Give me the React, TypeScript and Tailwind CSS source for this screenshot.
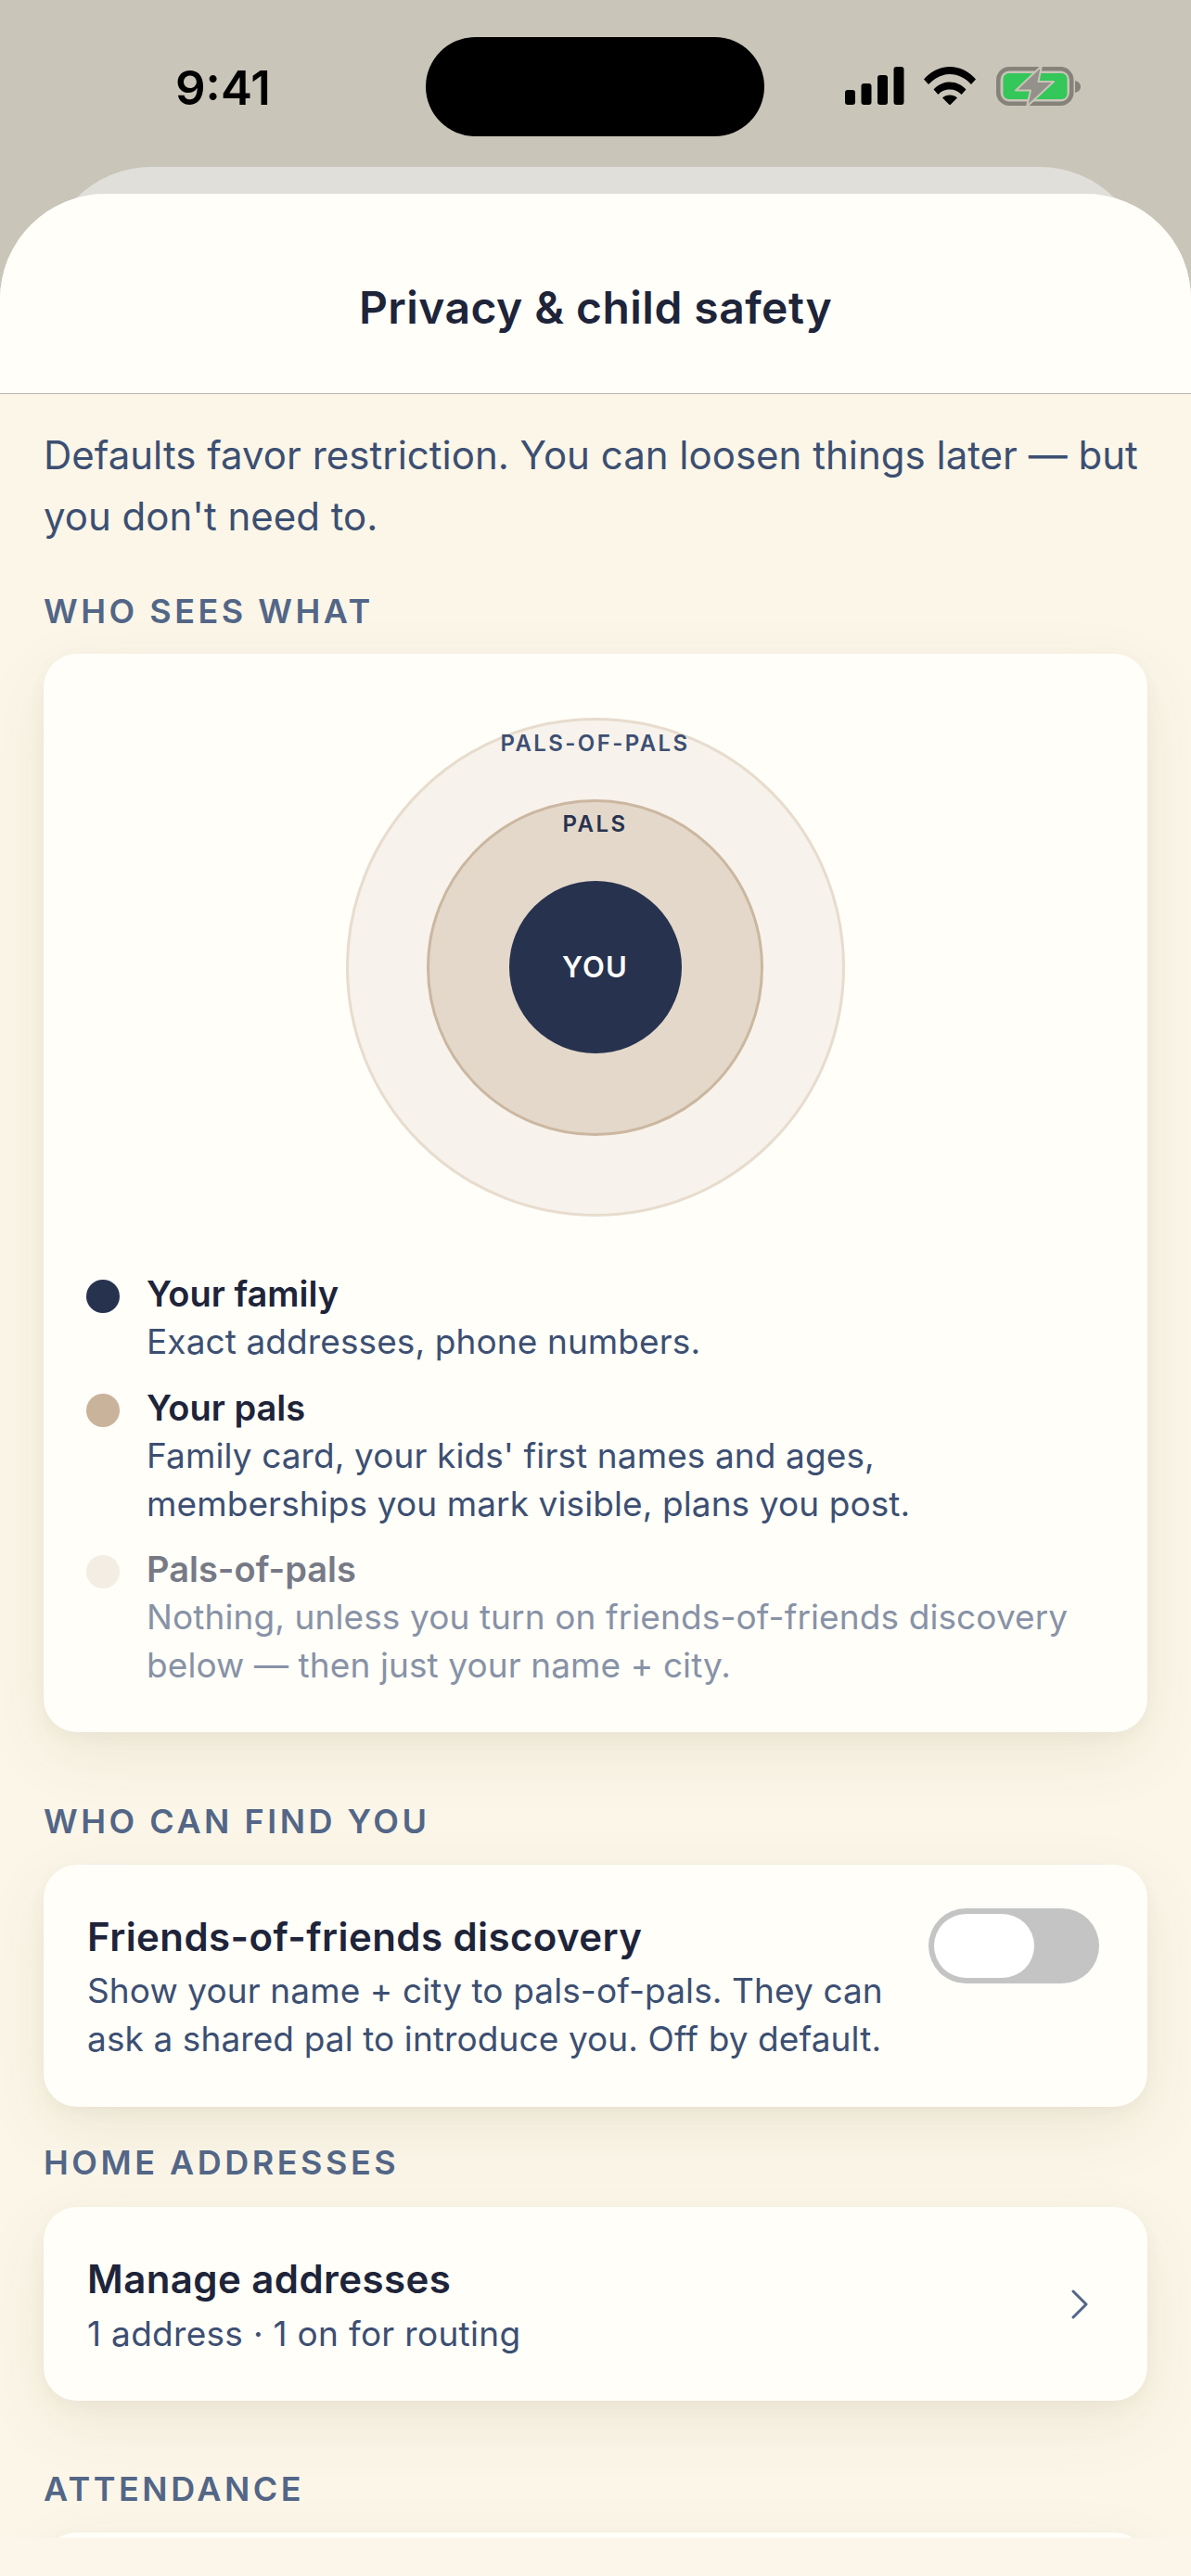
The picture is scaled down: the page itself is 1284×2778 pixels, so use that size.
import React from 'react';

const FONT = "font-['Inter','Noto_Sans',sans-serif]";

const SignalIcon = () => (
  <svg width="64" height="41" viewBox="0 0 64 41" fill="#000">
    <rect x="0" y="25" width="11" height="16" rx="3" />
    <rect x="17.500" y="18" width="11" height="23" rx="3" />
    <rect x="35" y="9" width="11" height="32" rx="3" />
    <rect x="52.500" y="0" width="11" height="41" rx="3" />
  </svg>
);

const WifiIcon = () => (
  <svg width="56" height="41" viewBox="0 0 56 41" fill="#000">
    <path d="M0 13.500C7.500 5 17 0 28 0s20.500 5 28 13.500l-5 5.500C44.500 12 37 8 28 8S11.500 12 5 19z" />
    <path d="M10.500 24.500C15 19.500 21 16.500 28 16.500s13 3 17.500 8l-5 5.500C37.500 26.500 33 24.500 28 24.500S18.500 26.500 15.500 30z" />
    <path d="M20 33.500c2-2 4.800-3 8-3s6 1 8 3L28 41.500z" />
  </svg>
);

const BatteryIcon = () => (
  <svg width="92" height="42" viewBox="0 0 92 42">
    <rect x="2.250" y="2.250" width="79" height="37.500" rx="12" fill="none" stroke="#85827a" strokeWidth="4.500" />
    <rect x="7.500" y="7" width="69" height="28" rx="6" fill="#34c759" />
    <path d="M85 15c3.500 1 6 3 6 6.500s-2.500 5.500-6 6.500z" fill="#85827a" />
    <path d="M49 -1 21 25.500h16l-4 17.500 29-27H45.500z" fill="#94918a" stroke="#c9c5b9" strokeWidth="2" strokeLinejoin="round" />
  </svg>
);

const SectionLabel = ({ children, className = '' }: { children: React.ReactNode; className?: string }) => (
  <h2 className={`mx-[47px] text-[36px] leading-[48px] font-semibold tracking-[3.500px] uppercase text-[#536687] ${className}`}>
    {children}
  </h2>
);

const cardClass =
  'mx-[47px] rounded-[36px] bg-[#fffef9] shadow-[0_6px_18px_rgba(90,80,30,0.05),0_24px_72px_rgba(90,80,30,0.08)]';

const legend = [
  {
    dot: 'bg-[#27324f]',
    title: 'Your family',
    titleColor: 'text-[#1e2439]',
    descColor: 'text-[#3c4f72]',
    lines: ['Exact addresses, phone numbers.'],
    mt: '',
  },
  {
    dot: 'bg-[#c9b39b]',
    title: 'Your pals',
    titleColor: 'text-[#1e2439]',
    descColor: 'text-[#3c4f72]',
    lines: ["Family card, your kids' first names and ages,", 'memberships you mark visible, plans you post.'],
    mt: 'mt-[18px]',
  },
  {
    dot: 'bg-[#f3ede4]',
    title: 'Pals-of-pals',
    titleColor: 'text-[#777a86]',
    descColor: 'text-[#8892a6]',
    lines: ['Nothing, unless you turn on friends-of-friends discovery', 'below — then just your name + city.'],
    mt: 'mt-[17px]',
  },
];

const App: React.FC = () => {
  return (
    <div className={`w-[1284px] h-[2778px] overflow-hidden flex flex-col bg-[#c9c5b9] ${FONT}`}>
      {/* Status bar */}
      <div className="h-[180px] shrink-0 flex items-start justify-between pt-[40px] pl-[189px] pr-[118px]">
        <span className="w-[104px] mt-[21px] text-[51px] leading-[68px] font-semibold text-black">9:41</span>
        <div className="w-[366px] h-[107px] rounded-[54px] bg-black ml-[166px]" />
        <div className="flex items-start mt-[32px] ml-[87px]">
          <SignalIcon />
          <div className="ml-[21px]">
            <WifiIcon />
          </div>
          <div className="ml-[22px]">
            <BatteryIcon />
          </div>
        </div>
      </div>

      {/* Sheet behind */}
      <div className="mx-[49px] h-[120px] -mb-[91px] shrink-0 rounded-t-[114px] bg-[#e0dfda]" />

      {/* Sheet */}
      <div className="relative flex-1 min-h-0 flex flex-col rounded-t-[114px] overflow-hidden bg-[#fbf6e8]">
        <div className="h-[216px] shrink-0 flex items-start justify-center pt-[92px] bg-[#fffef9] border-b-[1.500px] border-[#bdb6aa]">
          <h1 className="text-[48px] leading-[62px] font-semibold text-[#1e2439] tracking-[0.45px]">Privacy &amp; child safety</h1>
        </div>

        <div className="flex-1 min-h-0 overflow-hidden">
          <p className="mt-[33px] mx-[47px] text-[42px] leading-[66px] text-[#3c4f72]">
            Defaults favor restriction. You can loosen things later — but you don't need to.
          </p>

          <SectionLabel className="mt-[45px]">Who sees what</SectionLabel>
          <section className={`${cardClass} mt-[22px] pt-[69px] pb-[45px] pl-[46px] pr-[47px]`}>
            <div className="relative w-[538px] h-[538px] mx-auto rounded-full flex items-center justify-center bg-[#f7f2eb] border-[3px] border-[#e7dccd]">
              <div className="w-[363px] h-[363px] rounded-full flex items-center justify-center bg-[#e4d8ca] border-[3px] border-[#cbb7a0]">
                <div className="w-[186px] h-[186px] rounded-full flex items-center justify-center bg-[#27324f]">
                  <span className="text-[31px] font-semibold tracking-[0.04em] text-white">YOU</span>
                </div>
              </div>
              <span className="absolute top-[7px] left-0 right-0 text-center text-[24px] leading-[36px] font-semibold tracking-[2.400px] text-[#3c4f72]">
                PALS-OF-PALS
              </span>
              <span className="absolute top-[94px] left-0 right-0 text-center text-[24px] leading-[36px] font-semibold tracking-[2.400px] text-[#27324f]">
                PALS
              </span>
            </div>

            <ul className="mt-[57px]">
              {legend.map((item) => (
                <li key={item.title} className={`flex items-start ${item.mt}`}>
                  <span className={`w-[36px] h-[36px] shrink-0 mt-[11px] rounded-full ${item.dot}`} />
                  <div className="ml-[29px]">
                    <h3 className={`text-[38px] leading-[52px] font-semibold ${item.titleColor}`}>{item.title}</h3>
                    {item.lines.map((line) => (
                      <p key={line} className={`text-[37px] leading-[52.500px] tracking-[0.1px] ${item.descColor}`}>{line}</p>
                    ))}
                  </div>
                </li>
              ))}
            </ul>
          </section>

          <SectionLabel className="mt-[72px]">Who can find you</SectionLabel>
          <section className={`${cardClass} mt-[23px] h-[261px] pt-[47px] pl-[47px] pr-[52px] flex items-start justify-between`}>
            <div className="pt-[1px]">
              <h3 className="text-[42px] leading-[60px] font-semibold tracking-[0.42px] text-[#1e2439]">Friends-of-friends discovery</h3>
              <p className="mt-[2px] text-[37px] leading-[52.500px] tracking-[0.1px] text-[#3c4f72]">
                Show your name + city to pals-of-pals. They can
                <br />
                ask a shared pal to introduce you. Off by default.
              </p>
            </div>
            <div className="w-[184px] h-[81px] shrink-0 p-[6px] rounded-full bg-[#c4c4c4]">
              <div className="w-[108px] h-[69px] rounded-full bg-white" />
            </div>
          </section>

          <SectionLabel className="mt-[36px]">Home addresses</SectionLabel>
          <section className={`${cardClass} mt-[24px] h-[209px] pt-[48px] pl-[47px] pr-[64px] flex items-start justify-between`}>
            <div>
              <h3 className="text-[42px] leading-[60px] font-semibold tracking-[0.42px] text-[#1e2439]">Manage addresses</h3>
              <p className="mt-[3px] text-[37px] leading-[52.500px] tracking-[0.3px] text-[#3c4f72]">1 address · 1 on for routing</p>
            </div>
            <svg className="mt-[41px]" width="18" height="32" viewBox="0 0 18 32" fill="none" stroke="#536687" strokeWidth="3" strokeLinecap="round" strokeLinejoin="round">
              <path d="M2 2l14 14L2 30" />
            </svg>
          </section>

          <SectionLabel className="mt-[71px]">Attendance</SectionLabel>
          <section className={`${cardClass} mt-[23px] h-[200px]`} />
        </div>

        {/* Bottom strip covering the scroll */}
        <div className="h-[41px] shrink-0 bg-[#fbf5ea]" />
      </div>
    </div>
  );
};

export default App;
